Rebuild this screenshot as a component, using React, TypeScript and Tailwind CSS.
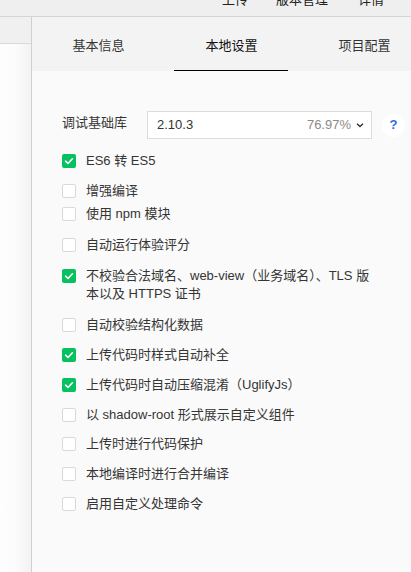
import React from "react";

interface OptionItem {
  id: string;
  label: string;
  checked: boolean;
  mt: string;
}

const options: OptionItem[] = [
  { id: "es6", label: "ES6 转 ES5", checked: true, mt: "mt-0" },
  { id: "enhance", label: "增强编译", checked: false, mt: "mt-[12px]" },
  { id: "npm", label: "使用 npm 模块", checked: false, mt: "mt-[5px]" },
  { id: "audit", label: "自动运行体验评分", checked: false, mt: "mt-[13px]" },
  {
    id: "domain",
    label: "不校验合法域名、web-view（业务域名）、TLS 版本以及 HTTPS 证书",
    checked: true,
    mt: "mt-[13px]",
  },
  { id: "schema", label: "自动校验结构化数据", checked: false, mt: "mt-[13px]" },
  { id: "postcss", label: "上传代码时样式自动补全", checked: true, mt: "mt-[12px]" },
  { id: "minify", label: "上传代码时自动压缩混淆（UglifyJs）", checked: true, mt: "mt-[12px]" },
  { id: "shadow", label: "以 shadow-root 形式展示自定义组件", checked: false, mt: "mt-[12px]" },
  { id: "protect", label: "上传时进行代码保护", checked: false, mt: "mt-[11px]" },
  { id: "merge", label: "本地编译时进行合并编译", checked: false, mt: "mt-[12px]" },
  { id: "custom", label: "启用自定义处理命令", checked: false, mt: "mt-[12px]" },
];

const tabs = ["基本信息", "本地设置", "项目配置"];

function Checkbox({ checked }: { checked: boolean }) {
  if (checked) {
    return (
      <span className="mt-[2px] flex h-[14px] w-[14px] shrink-0 items-center justify-center rounded-[2px] bg-[#07c160]">
        <svg viewBox="0 0 14 14" className="h-[14px] w-[14px]">
          <path
            d="M3.6 7.2 L6 9.5 L10.4 4.8"
            fill="none"
            stroke="white"
            strokeWidth="1.6"
            strokeLinecap="round"
            strokeLinejoin="round"
          />
        </svg>
      </span>
    );
  }
  return (
    <span className="mt-[2px] h-[14px] w-[14px] shrink-0 rounded-[2px] border border-[#d9d9d9] bg-white" />
  );
}

export default function App() {
  return (
    <div
      className="flex h-[572px] w-[411px] flex-col overflow-hidden bg-[#fafafa] text-[13px] text-[#353535]"
      style={{ fontFamily: '"Liberation Sans", "Noto Sans CJK SC", sans-serif' }}
    >
      {/* top toolbar, mostly scrolled off */}
      <div className="flex h-[17px] shrink-0 items-start justify-end gap-[28px] overflow-hidden border-b border-[#d5d5d5] bg-[#efefef] pr-[27px] text-[#222]">
        <span className="-mt-[7px] leading-[13px]">上传</span>
        <span className="-mt-[7px] leading-[13px]">版本管理</span>
        <span className="-mt-[7px] ml-[2px] leading-[13px]">详情</span>
      </div>

      <div className="flex min-h-0 flex-1">
        {/* left editor strip */}
        <div className="flex w-[32px] shrink-0 flex-col border-r border-[#d0d0d0]">
          <div className="h-[27px] border-b border-[#d9d9d9] bg-[#f0f0f0]" />
          <div className="flex-1 bg-gradient-to-r from-[#fefefe] via-[#fcfcfc] to-[#f2f2f2]" />
        </div>

        {/* settings panel */}
        <div className="flex min-w-0 flex-1 flex-col">
          <div className="flex h-[54px] shrink-0 overflow-hidden bg-[#f3f3f3]">
            {tabs.map((tab, i) => (
              <div
                key={tab}
                className={`relative flex w-[133px] shrink-0 items-center justify-center pt-[3px] ${
                  i === 1 ? "text-[#111]" : "text-[#333]"
                }`}
              >
                {tab}
                {i === 1 && (
                  <span className="absolute bottom-0 left-[9px] right-[10px] h-[1.5px] bg-black" />
                )}
              </div>
            ))}
          </div>

          <div className="flex flex-col pl-[30px] pt-[40px]">
            <div className="flex items-center">
              <span className="w-[85px] shrink-0 -mt-[4px]">调试基础库</span>
              <div className="flex h-[28px] w-[225px] shrink-0 items-center border border-[#dcdcdc] bg-white pl-[9px] pr-[6px]">
                <span className="flex-1 text-[#333]">2.10.3</span>
                <span className="text-[#8a8a8a]">76.97%</span>
                <svg viewBox="0 0 10 10" className="ml-[4px] h-[10px] w-[10px]">
                  <path
                    d="M2 3.8 L5 6.6 L8 3.8"
                    fill="none"
                    stroke="#333"
                    strokeWidth="1.4"
                  />
                </svg>
              </div>
              <span className="ml-[10px] flex h-[23px] w-[23px] items-center justify-center rounded-full bg-white text-[13px] font-bold text-[#2a6ee8]">
                ?
              </span>
            </div>

            <div className="mt-[13px] flex flex-col">
              {options.map((opt) => (
                <label key={opt.id} className={`flex items-start gap-[10px] ${opt.mt}`}>
                  <Checkbox checked={opt.checked} />
                  <span className="w-[290px] leading-[18px]">{opt.label}</span>
                </label>
              ))}
            </div>
          </div>
        </div>
      </div>
    </div>
  );
}
